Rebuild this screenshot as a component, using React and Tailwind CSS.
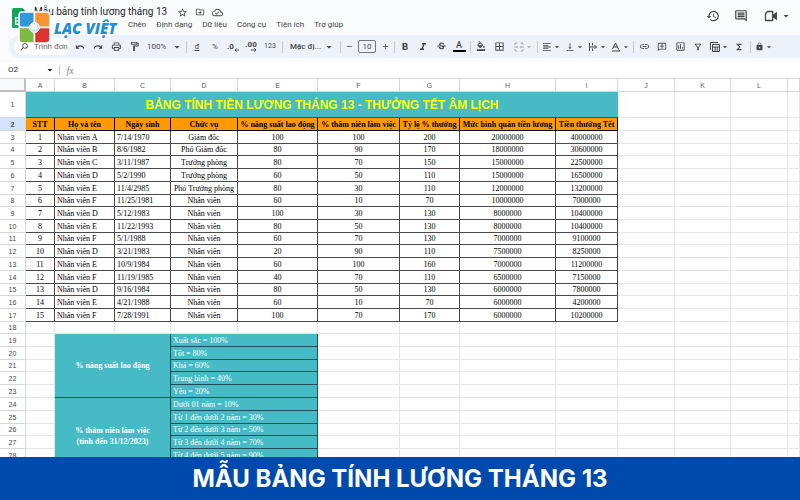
// src/App.jsx
import {
  MdUndo,
  MdRedo,
  MdOutlinePrint,
  MdOutlineFormatPaint,
  MdArrowDropDown,
  MdFormatBold,
  MdFormatItalic,
  MdStrikethroughS,
  MdBorderAll,
  MdFormatAlignLeft,
  MdVerticalAlignBottom,
  MdLink,
  MdOutlineAddComment,
  MdOutlineInsertChart,
  MdOutlineFilterAlt,
  MdFunctions,
  MdLock,
  MdHistory,
  MdOutlineComment,
  MdStarOutline,
  MdOutlineDriveFileMove,
  MdOutlineCloudDone,
  MdSearch,
  MdAdd,
  MdRemove,
  MdFormatColorFill,
} from "react-icons/md";

const MENUS = ["Chèn", "Định dạng", "Dữ liệu", "Công cụ", "Tiện ích", "Trợ giúp"];

const COLUMNS = [
  { name: "A", width: "w-[29px]" },
  { name: "B", width: "w-[60px]" },
  { name: "C", width: "w-[56px]" },
  { name: "D", width: "w-[67px]" },
  { name: "E", width: "w-[80px]" },
  { name: "F", width: "w-[82px]" },
  { name: "G", width: "w-[60px]" },
  { name: "H", width: "w-[96px]" },
  { name: "I", width: "w-[62px]" },
  { name: "J", width: "w-[57px]" },
  { name: "K", width: "w-[56px]" },
  { name: "L", width: "w-[57px]" },
  { name: "", width: "" },
];

const HEADINGS = [
  "STT",
  "Họ và tên",
  "Ngày sinh",
  "Chức vụ",
  "% năng suất lao động",
  "% thâm niên làm việc",
  "Tỷ lệ % thưởng",
  "Mức bình quân tiền lương",
  "Tiền thưởng Tết",
];

const EMPLOYEES = [
  ["1", "Nhân viên A", "7/14/1970", "Giám đốc", "100", "100", "200", "20000000", "40000000"],
  ["2", "Nhân viên B", "8/6/1982", "Phó Giám đốc", "80", "90", "170", "18000000", "30600000"],
  ["3", "Nhân viên C", "3/11/1987", "Trưởng phòng", "80", "70", "150", "15000000", "22500000"],
  ["4", "Nhân viên D", "5/2/1990", "Trưởng phòng", "60", "50", "110", "15000000", "16500000"],
  ["5", "Nhân viên E", "11/4/2985", "Phó Trưởng phòng", "80", "30", "110", "12000000", "13200000"],
  ["6", "Nhân viên F", "11/25/1981", "Nhân viên", "60", "10", "70", "10000000", "7000000"],
  ["7", "Nhân viên D", "5/12/1983", "Nhân viên", "100", "30", "130", "8000000", "10400000"],
  ["8", "Nhân viên E", "11/22/1993", "Nhân viên", "80", "50", "130", "8000000", "10400000"],
  ["9", "Nhân viên F", "5/1/1988", "Nhân viên", "60", "70", "130", "7000000", "9100000"],
  ["10", "Nhân viên D", "3/21/1983", "Nhân viên", "20", "90", "110", "7500000", "8250000"],
  ["11", "Nhân viên E", "10/9/1984", "Nhân viên", "60", "100", "160", "7000000", "11200000"],
  ["12", "Nhân viên F", "11/19/1985", "Nhân viên", "40", "70", "110", "6500000", "7150000"],
  ["13", "Nhân viên D", "9/16/1984", "Nhân viên", "80", "50", "130", "6000000", "7800000"],
  ["14", "Nhân viên E", "4/21/1988", "Nhân viên", "60", "10", "70", "6000000", "4200000"],
  ["15", "Nhân viên F", "7/28/1991", "Nhân viên", "100", "70", "170", "6000000", "10200000"],
];

const RULES = [
  { row: 19, text: "Xuất sắc = 100%", group: ["% năng suất lao động"], span: 5 },
  { row: 20, text: "Tốt = 80%" },
  { row: 21, text: "Khá = 60%" },
  { row: 22, text: "Trung bình = 40%" },
  { row: 23, text: "Yếu = 20%" },
  { row: 24, text: "Dưới 01 năm = 10%", group: ["% thâm niên làm việc", "(tính đến 31/12/2023)"], span: 6 },
  { row: 25, text: "Từ 1 đến dưới 2 năm = 30%" },
  { row: 26, text: "Từ 2 đến dưới 3 năm = 50%" },
  { row: 27, text: "Từ 3 đến dưới 4 năm = 70%" },
  { row: 28, text: "Từ 4 đến dưới 5 năm = 90%" },
  { row: 29, text: "" },
];

// these rows are one pixel lower than the rest
const SHORT_ROWS = [4, 8, 11, 15, 18, 21, 26];

function rowHeight(n) {
  return SHORT_ROWS.includes(n) ? "h-3" : "h-[13px]";
}

function ToolButton({ label, className = "w-[18px]", children }) {
  return (
    <button aria-label={label} className={`flex shrink-0 items-center justify-center ${className}`}>
      {children}
    </button>
  );
}

function DropButton({ label, className = "", children }) {
  return (
    <button aria-label={label} className={`flex w-[23px] shrink-0 items-center pl-[3px] ${className}`}>
      {children}
      <MdArrowDropDown size={10} />
    </button>
  );
}

function Separator() {
  return (
    <span className="flex w-1 shrink-0 items-center justify-center">
      <span className="h-3 w-px bg-[#c7cbd1]" />
    </span>
  );
}

function SheetsIcon() {
  return (
    <svg viewBox="0 0 15 20" className="h-5 w-[15px]">
      <path d="M1.500 0H10l5 5v13.500a1.500 1.500 0 0 1-1.500 1.500h-12A1.500 1.500 0 0 1 0 18.500v-17A1.500 1.500 0 0 1 1.500 0z" fill="#12a75c" />
      <path d="M10 0l5 5h-5z" fill="#0b7f43" />
      <path d="M3 9h9v8H3zM4.300 10.300v2h2.500v-2zm3.800 0v2h2.600v-2zM4.300 13.600v2h2.500v-2zm3.800 0v2h2.600v-2z" fill="#fff" fillRule="evenodd" />
    </svg>
  );
}

function BrandLogo() {
  return (
    <div className="absolute top-[11px] left-[18px] flex items-center gap-[2px]">
      <svg viewBox="0 0 34 34" className="size-[34px]">
        <g stroke="#fff" strokeWidth="1.500">
          <path d="M4 1h12.500v15.500H4q-3 0-3-3V5q0-4 3-4z" fill="#2d9bdb" />
          <path d="M16.500 1H28q4 0 4 4v11.500H16.500z" fill="#f79433" />
          <path d="M1 16.500h15.500V32H5q-4 0-4-4z" fill="#7dba42" />
          <path d="M16.500 16.500H32V28q0 4-4 4H16.500z" fill="#dd3330" />
        </g>
        <circle cx="16.500" cy="16.500" r="5" fill="#dfe3e6" stroke="#fff" strokeWidth="1" />
        <circle cx="16" cy="16" r="2.800" fill="#fafafa" />
      </svg>
      <span className="font-['Open_Sans',sans-serif] text-[15px] leading-4 font-extrabold italic text-[#1f8fd3] [-webkit-text-stroke:3px_white] [paint-order:stroke]">
        LẠC VIỆT
      </span>
    </div>
  );
}

function TopBar() {
  return (
    <header className="relative flex h-[35px] text-[#444746]">
      <div className="w-[34px] shrink-0 pt-2 pl-3">
        <SheetsIcon />
      </div>
      <div className="flex-1 pt-1">
        <div className="flex h-4 items-center gap-[5px]">
          <h1 className="mr-[5px] text-[10px] leading-4 text-[#1f1f1f]">Mẫu bảng tính lương tháng 13</h1>
          <button aria-label="Gắn dấu sao"><MdStarOutline size={11} /></button>
          <button aria-label="Di chuyển" className="px-0.5"><MdOutlineDriveFileMove size={10} /></button>
          <button aria-label="Trạng thái tài liệu"><MdOutlineCloudDone size={11} /></button>
        </div>
        <nav className="flex h-[10px] items-center gap-[10px] pl-[94px] text-[8px] leading-[10px]">
          {MENUS.map((m) => (
            <button key={m}>{m}</button>
          ))}
        </nav>
      </div>
      <div className="flex h-8 items-center pr-2">
        <button aria-label="Lịch sử" className="mr-[14px]"><MdHistory size={14} /></button>
        <button aria-label="Nhận xét" className="mr-[16px]"><MdOutlineComment size={14} /></button>
        <button aria-label="Cuộc gọi" className="flex items-center gap-[2px]">
          <svg viewBox="0 0 14 12" className="h-3 w-[14px]" fill="none" stroke="currentColor" strokeWidth="1.300">
            <path d="M3.500 1.500h5.200v9H1.500v-7z" strokeLinejoin="round" />
            <path d="M9.500 5l2.800-2v6L9.500 7z" fill="currentColor" />
          </svg>
          <MdArrowDropDown size={12} />
        </button>
      </div>
      <BrandLogo />
    </header>
  );
}

function Toolbar() {
  return (
    <div className="ml-[9px] flex h-[23px] items-stretch rounded-l-full bg-[#edf2fa] pl-[5px] text-[8px] text-[#444746]">
      <label className="my-[3px] mr-px flex w-14 shrink-0 items-center rounded-full bg-white pl-[5px]">
        <MdSearch size={10} className="shrink-0 -scale-x-100" />
        <input
          aria-label="Tìm trong trình đơn"
          placeholder="Trình đơn"
          className="ml-[5px] w-9 bg-transparent text-[8px] outline-none placeholder:text-[#5f6368]"
        />
      </label>
      <ToolButton label="Hoàn tác"><MdUndo size={10} /></ToolButton>
      <ToolButton label="Làm lại"><MdRedo size={10} /></ToolButton>
      <ToolButton label="In"><MdOutlinePrint size={11} /></ToolButton>
      <ToolButton label="Sao chép định dạng"><MdOutlineFormatPaint size={11} /></ToolButton>
      <button className="flex w-[41px] shrink-0 items-center justify-between pr-px pl-1">
        100% <MdArrowDropDown size={12} />
      </button>
      <Separator />
      <ToolButton label="Tiền tệ"><span className="underline">đ</span></ToolButton>
      <ToolButton label="Phần trăm">%</ToolButton>
      <ToolButton label="Giảm số thập phân">
        <span className="flex items-center font-bold">
          .0
          <svg viewBox="0 0 5 10" className="h-[10px] w-[5px]" fill="none" stroke="currentColor">
            <path d="M5 8H1M2.500 6.500L1 8l1.500 1.500" />
          </svg>
        </span>
      </ToolButton>
      <ToolButton label="Tăng số thập phân">
        <span className="flex flex-col items-end font-bold leading-[7px]">
          .00
          <svg viewBox="0 0 6 4" className="h-1 w-[6px]" fill="none" stroke="currentColor">
            <path d="M0 2h5M3.500.500L5 2 3.500 3.500" />
          </svg>
        </span>
      </ToolButton>
      <ToolButton label="Định dạng khác" className="w-5 text-[7px]">123</ToolButton>
      <Separator />
      <button className="flex w-[54px] shrink-0 items-center justify-between pr-[3px] pl-[6px] font-medium">
        Mặc đị... <MdArrowDropDown size={12} />
      </button>
      <Separator />
      <ToolButton label="Giảm cỡ chữ" className="w-[14px]"><MdRemove size={9} /></ToolButton>
      <input
        aria-label="Cỡ chữ"
        defaultValue="10"
        className="mx-0.5 my-[5px] w-[18px] shrink-0 rounded-[2px] border border-[#747775] text-center text-[8px]"
      />
      <ToolButton label="Tăng cỡ chữ" className="w-[14px]"><MdAdd size={9} /></ToolButton>
      <Separator />
      <ToolButton label="In đậm"><MdFormatBold size={12} /></ToolButton>
      <ToolButton label="In nghiêng"><MdFormatItalic size={12} /></ToolButton>
      <ToolButton label="Gạch ngang"><MdStrikethroughS size={11} /></ToolButton>
      <ToolButton label="Màu chữ">
        <span className="flex w-[13px] flex-col items-center border-b-2 border-black text-[9px] leading-[9px] font-medium">A</span>
      </ToolButton>
      <Separator />
      <ToolButton label="Màu nền">
        <span className="flex w-[13px] justify-center border-b-2 border-white">
          <MdFormatColorFill size={10} />
        </span>
      </ToolButton>
      <ToolButton label="Đường viền"><MdBorderAll size={11} /></ToolButton>
      <DropButton label="Hợp nhất ô" className="mr-px ml-[3px] text-[#a8abae]">
        <svg viewBox="0 0 10 10" className="size-[10px]" fill="none" stroke="currentColor">
          <path d="M3.500 1H1v2M6.500 1H9v2M3.500 9H1V7M6.500 9H9V7M0 5h3.500M10 5H6.500M2.500 4l1 1-1 1M7.500 4l-1 1 1 1" />
        </svg>
      </DropButton>
      <Separator />
      <DropButton label="Căn ngang"><MdFormatAlignLeft size={10} /></DropButton>
      <DropButton label="Căn dọc"><MdVerticalAlignBottom size={10} /></DropButton>
      <DropButton label="Xuống dòng">
        <svg viewBox="0 0 10 10" className="size-[10px]" fill="none" stroke="currentColor">
          <path d="M1.500 1v8M4.500 1v2.500M4.500 6.500V9M2 5h6.500M6.500 3l2 2-2 2" />
        </svg>
      </DropButton>
      <DropButton label="Xoay chữ">
        <svg viewBox="0 0 10 10" className="size-[10px]" fill="none" stroke="currentColor">
          <path d="M1.500 7L4.500 1l3 6M2.500 5h4M1 9h8M7.500 7.500L9 9" />
        </svg>
      </DropButton>
      <Separator />
      <ToolButton label="Chèn đường liên kết"><MdLink size={11} /></ToolButton>
      <ToolButton label="Chèn nhận xét"><MdOutlineAddComment size={10} className="-scale-x-100" /></ToolButton>
      <ToolButton label="Chèn biểu đồ"><MdOutlineInsertChart size={11} /></ToolButton>
      <ToolButton label="Bộ lọc"><MdOutlineFilterAlt size={10} /></ToolButton>
      <DropButton label="Chế độ bảng">
        <svg viewBox="0 0 10 10" className="size-[10px]" fill="none" stroke="currentColor">
          <path d="M2.500 2.500h7v7h-7zM2.500 5h7M5 5v4.500M7.200 5v4.500M.500 8V.500H8" />
        </svg>
      </DropButton>
      <ToolButton label="Hàm"><MdFunctions size={10} /></ToolButton>
      <Separator />
      <DropButton label="Khóa" className="pl-1"><MdLock size={9} /></DropButton>
    </div>
  );
}

function FormulaBar() {
  return (
    <div className="flex h-4 items-center bg-white text-[8px] text-[#1f1f1f]">
      <button className="flex w-[59px] items-center justify-between pr-[3px] pl-2">
        O2 <MdArrowDropDown size={12} />
      </button>
      <span className="h-[10px] w-px bg-[#c7cbd1]" />
      <label htmlFor="formula" className="w-5 text-center font-['Liberation_Serif',serif] text-[10px] text-[#80868b] italic">
        fx
      </label>
      <input id="formula" className="min-w-0 flex-1 outline-none" />
    </div>
  );
}

function RowNumber({ n, className = "" }) {
  return (
    <th
      scope="row"
      className={`border-r border-b border-[#d5d7da] p-0 font-['Liberation_Sans',sans-serif] text-[7px] leading-[11px] text-[#444746] ${className}`}
    >
      {n}
    </th>
  );
}

function EmptyCells({ count }) {
  return Array.from({ length: count }, (_, i) => (
    <td key={i} className="border-r border-b border-[#e4e5e6] p-0" />
  ));
}

function Sheet() {
  return (
    <table className="w-full table-fixed border-separate border-spacing-0 bg-white font-['Liberation_Serif',serif] text-[8px] leading-[11px] text-black">
      <colgroup>
        <col className="w-[26px]" />
        {COLUMNS.map((c, i) => (
          <col key={i} className={c.width} />
        ))}
      </colgroup>
      <thead>
        <tr className="h-[14px] font-['Liberation_Sans',sans-serif] text-[7px] text-[#575b5f]">
          <td className="border-t border-r-2 border-b-2 border-t-[#d5d7da] border-r-[#bcbec0] border-b-[#bcbec0] bg-[#f8f9fa] p-0" />
          {COLUMNS.map((c, i) => (
            <th key={i} scope="col" className="border-y border-r border-[#d5d7da] p-0 font-normal">
              {c.name}
            </th>
          ))}
        </tr>
      </thead>
      <tbody>
        <tr className="h-[26px]">
          <RowNumber n={1} className="font-normal" />
          <td
            colSpan={9}
            className="border-b border-[#245e64] bg-[#46bbc6] p-0 text-center font-['Liberation_Sans',sans-serif] text-[12px] leading-4 font-bold text-[#ffff00]"
          >
            BẢNG TÍNH TIỀN LƯƠNG THÁNG 13 - THƯỞNG TẾT ÂM LỊCH
          </td>
          <EmptyCells count={4} />
        </tr>
        <tr className="h-[13px]">
          <RowNumber n={2} className="bg-[#d3e3fd] font-bold" />
          {HEADINGS.map((h) => (
            <th key={h} className="border-r border-b border-black bg-[#ff9900] p-0 text-center font-bold whitespace-nowrap">
              {h}
            </th>
          ))}
          <EmptyCells count={4} />
        </tr>
        {EMPLOYEES.map((row, r) => (
          <tr key={row[0]} className={rowHeight(r + 3)}>
            <RowNumber n={r + 3} className="font-normal" />
            {row.map((value, i) => (
              <td
                key={i}
                className={`border-r border-b border-[#4a4a4a] p-0 whitespace-nowrap ${
                  i === 1 || i === 2 ? "pl-0.5 text-left" : "text-center"
                }`}
              >
                {value}
              </td>
            ))}
            <EmptyCells count={4} />
          </tr>
        ))}
        <tr className="h-3">
          <RowNumber n={18} className="font-normal" />
          <EmptyCells count={13} />
        </tr>
        {RULES.map((rule) => (
          <tr key={rule.row} className={rowHeight(rule.row)}>
            <RowNumber n={rule.row} className="font-normal" />
            <EmptyCells count={1} />
            {rule.group && (
              <td
                colSpan={2}
                rowSpan={rule.span}
                className="border-r border-b border-[#1d4f54] bg-[#46bbc6] p-0 text-center font-bold text-white"
              >
                {rule.group.map((line) => (
                  <div key={line}>{line}</div>
                ))}
              </td>
            )}
            <td colSpan={2} className="border-r border-b border-[#1d4f54] bg-[#46bbc6] p-0 pl-0.5 text-white">
              {rule.text}
            </td>
            <EmptyCells count={8} />
          </tr>
        ))}
      </tbody>
    </table>
  );
}

export default function App() {
  return (
    <div className="flex h-screen flex-col overflow-hidden bg-[#f9fbfd] font-[Roboto,sans-serif]">
      <TopBar />
      <Toolbar />
      <div className="mt-1">
        <FormulaBar />
      </div>
      <main className="min-h-0 flex-1 overflow-hidden bg-white">
        <Sheet />
      </main>
      <footer className="flex h-[43px] shrink-0 items-center justify-center bg-[#004aad]">
        <h2 className="font-[Inter,sans-serif] text-2xl font-bold text-white">MẪU BẢNG TÍNH LƯƠNG THÁNG 13</h2>
      </footer>
    </div>
  );
}
